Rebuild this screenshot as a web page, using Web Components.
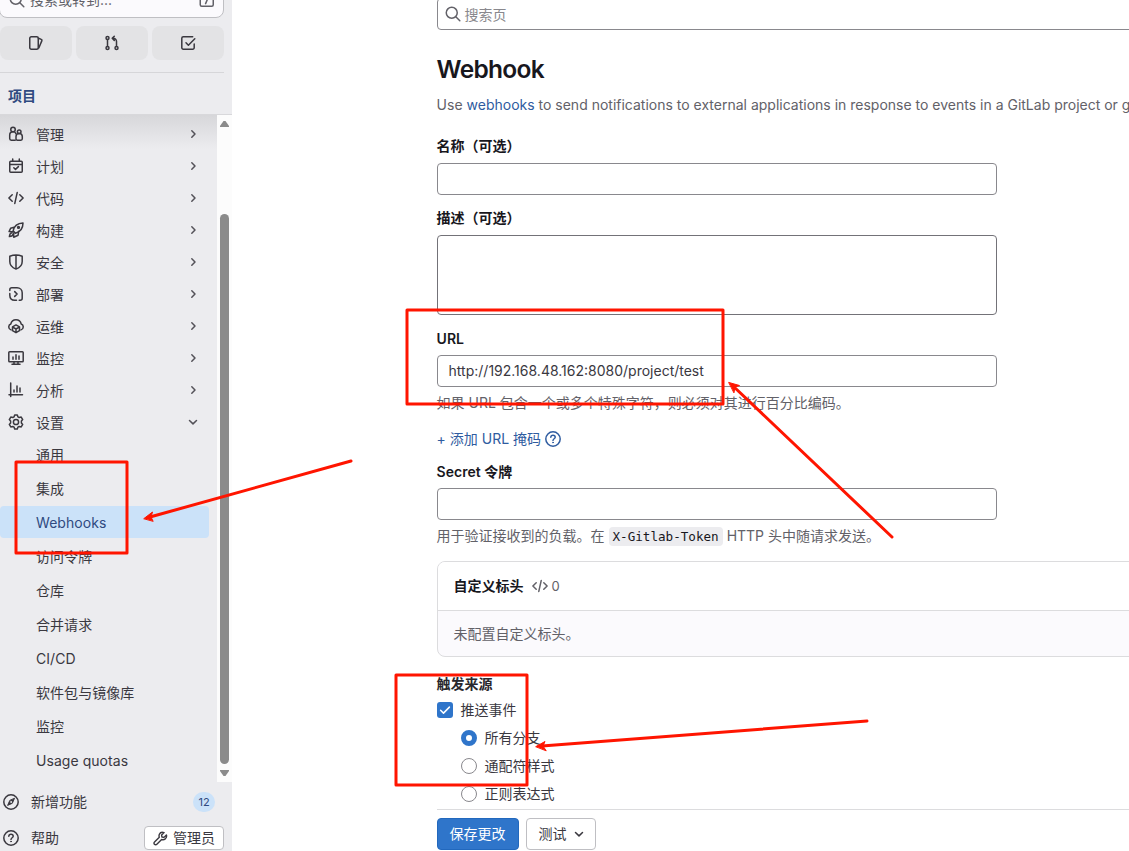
<!DOCTYPE html>
<html lang="zh-CN">
<head>
<meta charset="utf-8">
<title>Webhook · GitLab</title>
<style>
    body {
        margin: 0;
        height: 851px;
        overflow: hidden;
        background: #fff;
        color: #3a383f;
        font: 14px/20px Inter, "Noto Sans CJK SC", sans-serif;
    }
</style>
</head>
<body>
<webhook-page></webhook-page>

<script>
const ICONS = {
    search: '<circle cx="6.75" cy="6.75" r="5.5"/><path d="M10.8 10.8l4 4"/>',
    slash: '<rect x="1.25" y="1.25" width="13" height="13" rx="1.5"/><path d="M9.6 4.6l-3 7"/>',
    issues: '<rect x="1.75" y="1.75" width="8.5" height="12.5" rx="1.5"/><path d="M10.5 3.2l2.8 1.2a1 1 0 0 1 .6 1.2l-3.1 7.4"/>',
    merge: '<circle cx="3.5" cy="3" r="1.5"/><circle cx="3.5" cy="13" r="1.5"/><circle cx="12.5" cy="13" r="1.5"/><path d="M3.5 4.5v7M12.5 11.5V6.3a3 3 0 0 0-3-3H8.3M10.3 1.2l-2.1 2.1 2.1 2.1"/>',
    todo: '<path d="M14.2 9v3.7a1.5 1.5 0 0 1-1.5 1.5H3.3a1.5 1.5 0 0 1-1.5-1.5V3.3a1.5 1.5 0 0 1 1.5-1.5h9.4M6 7.8l2.4 2.4 6.4-6.4"/>',
    manage: '<circle cx="5" cy="3.5" r="2.25"/><path d="M7.2 14.2H3.3c-1 0-1.6-.6-1.6-1.6V9.2C1.7 7 3.1 5.8 5 5.8s2.7.9 3 2"/><circle cx="11.2" cy="5.7" r="1.8"/><path d="M8 10.6c0-2 1.2-3.1 3.2-3.1s3.1 1.2 3.1 3.1v2.2c0 .9-.5 1.4-1.4 1.4H9.4c-.9 0-1.4-.5-1.4-1.4z"/>',
    plan: '<rect x="1.75" y="3.25" width="12.5" height="11" rx="1"/><path d="M2 6.5h12M4.7 1v2.2M11.3 1v2.2M5.8 9.7l1.7 1.7 2.9-2.8"/>',
    code: '<path d="M4.2 4.7L.9 8l3.3 3.3M11.8 4.7L15.1 8l-3.3 3.3M9.2 2.6L6.8 13.4"/>',
    rocket: '<path d="M5.1 8.8C6 4.5 9.5 1.2 15 1c0 5.2-3.1 8.9-7.5 10.2zM6.1 5.2L2.6 6.3 1.1 9.6l3.6.2M10.7 9.2l-.6 4-4.4 2v-4.3M4 10.8c-1.8.2-2.4 1.8-2.6 3.8 1.9-.1 3.4-.7 3.7-2.5"/><circle cx="10.5" cy="5.4" r=".9"/>',
    shield: '<path d="M8 1C5.8 1 3.6 1.5 1.8 2.2v5.3c0 3.8 2.7 6.3 6.2 7.6 3.5-1.3 6.2-3.8 6.2-7.6V2.2C12.4 1.5 10.2 1 8 1zM8 1v14"/>',
    deploy: '<path d="M1.8 4.6V3.8c0-1.2.8-2 2-2H9c3.1 0 5.2 2.2 5.2 5v5.4c0 1.2-.8 2-2 2h-1M1.8 7.5v1.7c0 3 2 5 5 5h1.7M6.7 5.6L9.1 8l-2.4 2.4"/>',
    cloud: '<path d="M3 11.9A3.1 3.1 0 0 1 2.8 6C3.4 3.3 5.3 1.8 8 1.8S12.6 3.3 13.2 6a3.1 3.1 0 0 1-.2 5.9"/><path d="M8 6.9l3.5 2v3.8L8 14.7l-3.5-2V8.9zM4.8 9.1L8 11l3.2-1.9M8 11v3.5"/>',
    monitor: '<rect x=".8" y="1.8" width="14.4" height="10" rx=".8"/><path d="M6 12v2M10 12v2M4 14.3h8M5 7v2.2M8 4.8v4.4M11 6v3.2"/>',
    chart: '<path d="M2.7 1v13.5M1 12.8h13.5M6 8v2M9 4v6M12 6v4"/>',
    settings: '<circle cx="8" cy="8" r="2.6"/><path d="M6.7.9h2.6l.6 1.9 1.3.7 2-.4 1.5 2.5L13.4 7v2l1.3 1.4-1.5 2.5-2-.4-1.3.7-.6 1.9H6.7l-.6-1.9-1.3-.7-2 .4-1.5-2.5L2.6 9V7L1.3 5.6l1.5-2.5 2 .4 1.3-.7z"/>',
    compass: '<circle cx="8" cy="8" r="7.2"/><path d="M11.4 4.6L9.3 9.3l-4.7 2.1 2.1-4.7z" fill="currentColor" stroke-width="1"/><circle cx="8" cy="8" r=".5" stroke="#ececef" stroke-width="1"/>',
    question: '<circle cx="8" cy="8" r="7.2"/><path d="M5.8 6.3C5.9 5 6.8 4.3 8 4.3s2.2.8 2.2 1.9C10.2 7.7 8 7.8 8 9.5"/><circle cx="8" cy="11.6" r=".4" fill="currentColor" stroke-width="1"/>',
    admin: '<path d="M14.3 4.2L11.7 6.8 9.5 6.4 9.2 4.3l2.6-2.6C9.9.9 7.7 1.5 6.8 3.4c-.5 1.1-.5 2.1-.1 3.2L1.6 11.7a1.7 1.7 0 0 0 0 2.5 1.7 1.7 0 0 0 2.5 0l5.1-5.1c1.3.5 2.8.3 3.9-.7 1.1-1.1 1.7-2.8 1.2-4.2z"/>',
    right: '<path d="M6.8 4.8L10 8l-3.2 3.2"/>',
    down: '<path d="M4.5 6.5L8 9.9l3.5-3.4"/>',
    check: '<path d="M3.6 8.3l2.9 2.8 5.9-6"/>'
};

class GlIcon extends HTMLElement {
    connectedCallback() {
        this.attachShadow({ mode: 'open' });
        this.shadowRoot.innerHTML = `
            <style>
                :host { display: block; width: 16px; height: 16px; flex: none; }
                svg { display: block; width: 100%; height: 100%; }
            </style>
            <svg viewBox="0 0 16 16" fill="none" stroke="currentColor" stroke-width="1.5"
                stroke-linecap="round" stroke-linejoin="round">${ICONS[this.getAttribute('name')]}</svg>
        `;
    }
}

class NavItem extends HTMLElement {
    connectedCallback() {
        const icon = this.getAttribute('icon');
        const arrow = this.hasAttribute('open') ? 'down' : 'right';
        this.attachShadow({ mode: 'open' });
        this.shadowRoot.innerHTML = `
            <style>
                :host { display: flex; align-items: center; height: 32px; padding: 0 16px 0 8px; }
                :host([sub]) {
                    width: 209px;
                    box-sizing: border-box;
                    padding-left: 36px;
                    margin-bottom: 2px;
                    border-radius: 4px;
                    letter-spacing: .05px;
                }
                :host([active]) { background: #cbe2f9; color: #2f4a80; }
                .label { flex: 1; padding-top: 1px; }
                .icon { margin-right: 12px; }
                .arrow { color: #535158; }
            </style>
            ${icon ? `<gl-icon class="icon" name="${icon}"></gl-icon>` : ''}
            <span class="label"><slot></slot></span>
            ${icon ? `<gl-icon class="arrow" name="${arrow}"></gl-icon>` : ''}
        `;
    }
}

class SideBar extends HTMLElement {
    connectedCallback() {
        this.attachShadow({ mode: 'open' });
        this.shadowRoot.innerHTML = `
            <style>
                :host {
                    display: flex;
                    flex-direction: column;
                    width: 232px;
                    height: 851px;
                    flex: none;
                    background: #ececef;
                    overflow: hidden;
                }
                .search {
                    display: flex;
                    align-items: center;
                    box-sizing: border-box;
                    width: 225px;
                    height: 36px;
                    margin: -18px 0 8px -1px;
                    padding: 0 8px 0 9px;
                    border: 1px solid #bfbfc3;
                    border-radius: 8px;
                    background: #fbfafd;
                    color: #626168;
                    flex: none;
                }
                .search span { flex: 1; margin-left: 5px; }
                .tabs { display: flex; gap: 4px; width: 224px; height: 34px; flex: none; }
                .tabs div {
                    flex: 1;
                    display: flex;
                    align-items: center;
                    justify-content: center;
                    background: #e3e3e5;
                    border-radius: 8px;
                }
                .title {
                    box-sizing: border-box;
                    width: 224px;
                    height: 42px;
                    margin-top: 12px;
                    padding: 13px 8px 0;
                    border-top: 1px solid #d6d6d9;
                    font-weight: 600;
                    color: #2f4a80;
                    flex: none;
                }
                .scroll { display: flex; height: 668px; flex: none; }
                nav {
                    flex: 1;
                    box-sizing: border-box;
                    padding-top: 3px;
                    border-top: 1px solid #d8d8db;
                    background: linear-gradient(#d7d7da, #ececef 34px);
                }
                .bar {
                    display: flex;
                    flex-direction: column;
                    align-items: center;
                    justify-content: space-between;
                    box-sizing: border-box;
                    width: 15px;
                    padding: 6px 0 6px;
                    border-top: 1px solid #d8d8db;
                    background: #fcfcfc;
                    color: #8b8b8b;
                }
                .bar svg { display: block; width: 9px; height: 6px; fill: currentColor; }
                .thumb { width: 9px; height: 550px; margin-top: 81px; border-radius: 5px; background: #8b8b8b; }
                .foot { display: flex; align-items: center; height: 36px; padding: 0 8px 0 3px; flex: none; }
                .foot .label { flex: 1; margin-left: 12px; }
                .new { padding-top: 2px; }
                .badge {
                    width: 22px;
                    height: 20px;
                    margin-right: 9px;
                    border-radius: 10px;
                    background: #cbe2f9;
                    color: #2f4a80;
                    font-size: 11px;
                    text-align: center;
                }
                .admin {
                    display: flex;
                    align-items: center;
                    box-sizing: border-box;
                    width: 80px;
                    height: 24px;
                    padding: 0 8px;
                    border: 1px solid #bfbfc3;
                    border-radius: 4px;
                    background: #fff;
                }
                .admin gl-icon { width: 15px; height: 15px; margin-right: 5px; }
            </style>
            <div class="search"><gl-icon name="search"></gl-icon><span>搜索或转到...</span><gl-icon name="slash"></gl-icon></div>
            <div class="tabs">
                <div><gl-icon name="issues"></gl-icon></div>
                <div><gl-icon name="merge"></gl-icon></div>
                <div><gl-icon name="todo"></gl-icon></div>
            </div>
            <div class="title">项目</div>
            <div class="scroll">
                <nav>
                    <nav-item icon="manage">管理</nav-item>
                    <nav-item icon="plan">计划</nav-item>
                    <nav-item icon="code">代码</nav-item>
                    <nav-item icon="rocket">构建</nav-item>
                    <nav-item icon="shield">安全</nav-item>
                    <nav-item icon="deploy">部署</nav-item>
                    <nav-item icon="cloud">运维</nav-item>
                    <nav-item icon="monitor">监控</nav-item>
                    <nav-item icon="chart">分析</nav-item>
                    <nav-item icon="settings" open>设置</nav-item>
                    <nav-item sub>通用</nav-item>
                    <nav-item sub>集成</nav-item>
                    <nav-item sub active>Webhooks</nav-item>
                    <nav-item sub>访问令牌</nav-item>
                    <nav-item sub>仓库</nav-item>
                    <nav-item sub>合并请求</nav-item>
                    <nav-item sub>CI/CD</nav-item>
                    <nav-item sub>软件包与镜像库</nav-item>
                    <nav-item sub>监控</nav-item>
                    <nav-item sub>Usage quotas</nav-item>
                </nav>
                <div class="bar">
                    <svg viewBox="0 0 9 6"><path d="M3.5 0h2L9 5v1H0V5z"/></svg>
                    <div class="thumb"></div>
                    <svg viewBox="0 0 9 6"><path d="M0 0h9v1L5.5 6h-2L0 1z"/></svg>
                </div>
            </div>
            <div class="foot new"><gl-icon name="compass"></gl-icon><span class="label">新增功能</span><span class="badge">12</span></div>
            <div class="foot"><gl-icon name="question"></gl-icon><span class="label">帮助</span>
                <div class="admin"><gl-icon name="admin"></gl-icon>管理员</div></div>
        `;
    }
}

class FormField extends HTMLElement {
    connectedCallback() {
        this.attachShadow({ mode: 'open' });
        this.shadowRoot.innerHTML = `
            <style>
                :host { display: block; width: 560px; --height: 32px; }
                label { display: block; height: 20px; margin-bottom: 7px; font-weight: 600; color: #18171d; }
                :host([low]) label { line-height: 22px; }
                .input {
                    box-sizing: border-box;
                    height: var(--height);
                    padding: 5px 11px;
                    border: 1px solid #89888d;
                    border-radius: 4px;
                    background: #fff;
                }
                :host([multiline]) { --height: 80px; }
                :host([multiline]) .input { border-color: #737278; }
                .help { margin-top: 6px; color: #626168; white-space: nowrap; }
            </style>
            <label>${this.getAttribute('label')}</label>
            <div class="input"><slot></slot></div>
            <div class="help"><slot name="help"></slot></div>
        `;
    }
}

class ChoiceRow extends HTMLElement {
    connectedCallback() {
        this.attachShadow({ mode: 'open' });
        this.shadowRoot.innerHTML = `
            <style>
                :host { display: flex; align-items: center; gap: 8px; height: 28px; flex: none; }
                :host([type="radio"]) { padding-left: 24px; }
                .mark {
                    box-sizing: border-box;
                    width: 16px;
                    height: 16px;
                    border: 1px solid #89888d;
                    border-radius: 3px;
                    background: #fff;
                    color: #fff;
                }
                :host([type="radio"]) .mark { border-radius: 50%; }
                :host([type="radio"][checked]) .mark { border: 5px solid #2f75ca; }
                :host([type="check"][checked]) .mark { border: 0; background: #2f75ca; }
            </style>
            <div class="mark">${this.getAttribute('type') === 'check' ? '<gl-icon name="check"></gl-icon>' : ''}</div>
            <span><slot></slot></span>
        `;
    }
}

class HeadersCard extends HTMLElement {
    connectedCallback() {
        this.attachShadow({ mode: 'open' });
        this.shadowRoot.innerHTML = `
            <style>
                :host {
                    display: block;
                    box-sizing: border-box;
                    width: 720px;
                    height: 96px;
                    border: 1px solid #dcdcde;
                    border-radius: 8px;
                    background: #fbfafd;
                    overflow: hidden;
                }
                .head {
                    display: flex;
                    align-items: center;
                    height: 48px;
                    padding: 0 16px;
                    border-bottom: 1px solid #dcdcde;
                    background: #fff;
                    color: #626168;
                }
                b { margin-right: 8px; font-weight: 600; color: #18171d; }
                gl-icon { margin-right: 4px; }
                .count { font-size: 13px; }
                .body { padding: 13px 16px; color: #626168; }
            </style>
            <div class="head"><b>自定义标头</b><gl-icon name="code"></gl-icon><span class="count">0</span></div>
            <div class="body"><slot></slot></div>
        `;
    }
}

class GlButton extends HTMLElement {
    connectedCallback() {
        this.attachShadow({ mode: 'open' });
        this.shadowRoot.innerHTML = `
            <style>
                :host {
                    display: flex;
                    align-items: center;
                    gap: 4px;
                    box-sizing: border-box;
                    height: 32px;
                    padding: 0 8px 0 12px;
                    border: 1px solid #bfbfc3;
                    border-radius: 4px;
                    background: #fff;
                }
                :host([primary]) { padding: 0 12px; border-color: #2268bd; background: #2f75ca; color: #fff; }
            </style>
            <slot></slot>
        `;
    }
}

class ArrowMarks extends HTMLElement {
    connectedCallback() {
        this.attachShadow({ mode: 'open' });
        this.shadowRoot.innerHTML = `
            <style>
                :host { position: absolute; left: 0; top: 0; width: 1129px; height: 851px; pointer-events: none; }
                svg { display: block; }
            </style>
            <svg width="1129" height="851" fill="none" stroke="#ff1500" stroke-width="3" stroke-linecap="round" stroke-linejoin="round">
                <rect x="16" y="462" width="111" height="91"/>
                <rect x="407" y="310" width="316" height="94"/>
                <rect x="396" y="675" width="131" height="110"/>
                <path d="M351 461L150 517M892 537L733 386M867 721L542 746"/>
                <g fill="#ff1500" stroke-width="1">
                    <path d="M144 518.500l8.500-6.500-1.500 5 2 4z"/>
                    <path d="M729 382.500l10.500 3-4.500 1.500-1 5.500z"/>
                    <path d="M536 746.500l9-5-2 4.500 3 4.500z"/>
                </g>
            </svg>
        `;
    }
}

class WebhookPage extends HTMLElement {
    connectedCallback() {
        this.attachShadow({ mode: 'open' });
        this.shadowRoot.innerHTML = `
            <style>
                :host { display: flex; position: relative; width: 1129px; height: 851px; overflow: hidden; }
                main {
                    display: flex;
                    flex-direction: column;
                    align-items: flex-start;
                    width: 720px;
                    margin-left: 204.6px;
                    flex: none;
                }
                .search {
                    display: flex;
                    align-items: center;
                    gap: 4px;
                    box-sizing: border-box;
                    width: 100%;
                    height: 32px;
                    margin-top: -2px;
                    padding-left: 7px;
                    border: 1px solid #89888d;
                    border-radius: 4px;
                    color: #626168;
                    flex: none;
                }
                .search span { color: #89888d; padding-top: 1px; }
                h1 { margin: 24px 0 10px; font-size: 24.5px; line-height: 31px; font-weight: 600; letter-spacing: -.7px; color: #18171d; }
                .intro { margin-bottom: 21px; color: #626168; white-space: nowrap; }
                a { color: #2f5ca0; }
                .gap { margin-bottom: 7px; }
                .mask { display: flex; align-items: center; gap: 4px; height: 20px; margin: 16px 0 12px; color: #2f5ca0; }
                code {
                    padding: 2px 4px;
                    border-radius: 4px;
                    background: #ececef;
                    color: #18171d;
                    font: 12.6px "DejaVu Sans Mono", monospace;
                }
                headers-card { margin: 15px 0 17px; flex: none; }
                .legend { height: 22px; font-weight: 600; color: #28272d; flex: none; }
                .actions {
                    display: flex;
                    gap: 7px;
                    box-sizing: border-box;
                    width: 100%;
                    height: 42px;
                    margin-top: 1px;
                    padding-top: 8px;
                    border-top: 1px solid #dcdcde;
                    background: #fff;
                    flex: none;
                }
            </style>
            <side-bar></side-bar>
            <main>
                <div class="search"><gl-icon name="search"></gl-icon><span>搜索页</span></div>
                <h1>Webhook</h1>
                <div class="intro">Use <a>webhooks</a> to send notifications to external applications in response to events in a GitLab project or group.</div>
                <form-field class="gap" label="名称（可选）"></form-field>
                <form-field class="gap" label="描述（可选）" multiline></form-field>
                <form-field label="URL" low>http://192.168.48.162:8080/project/test<span slot="help">如果 URL 包含一个或多个特殊字符，则必须对其进行百分比编码。</span></form-field>
                <div class="mask"><span>+ 添加 URL 掩码</span><gl-icon name="question"></gl-icon></div>
                <form-field label="Secret 令牌" low><span slot="help">用于验证接收到的负载。在 <code>X-Gitlab-Token</code> HTTP 头中随请求发送。</span></form-field>
                <headers-card>未配置自定义标头。</headers-card>
                <div class="legend">触发来源</div>
                <choice-row type="check" checked>推送事件</choice-row>
                <choice-row type="radio" checked>所有分支</choice-row>
                <choice-row type="radio">通配符样式</choice-row>
                <choice-row type="radio">正则表达式</choice-row>
                <div class="actions">
                    <gl-button primary>保存更改</gl-button>
                    <gl-button>测试<gl-icon name="down"></gl-icon></gl-button>
                </div>
            </main>
            <arrow-marks></arrow-marks>
        `;
    }
}

customElements.define('gl-icon', GlIcon);
customElements.define('nav-item', NavItem);
customElements.define('side-bar', SideBar);
customElements.define('form-field', FormField);
customElements.define('choice-row', ChoiceRow);
customElements.define('headers-card', HeadersCard);
customElements.define('gl-button', GlButton);
customElements.define('arrow-marks', ArrowMarks);
customElements.define('webhook-page', WebhookPage);
</script>
</body>
</html>
